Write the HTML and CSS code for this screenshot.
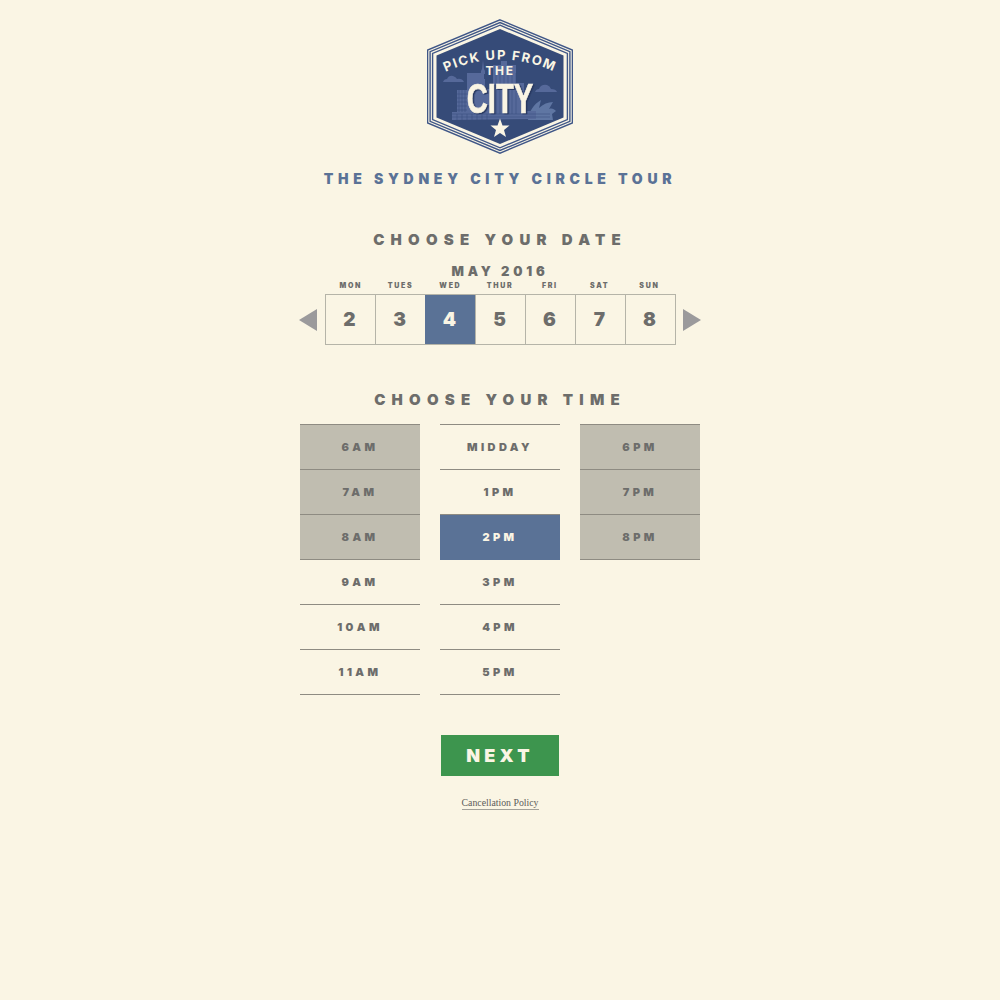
FILE: index.html
```html
<!DOCTYPE html>
<html lang="en">
<head>
<meta charset="utf-8">
<title>The Sydney City Circle Tour</title>
<link rel="stylesheet" href="styles.css">
</head>
<body>
<main class="page">
  <svg class="logo" width="146" height="136" viewBox="0 0 146 136" xmlns="http://www.w3.org/2000/svg">
    <defs>
      <path id="arc" d="M16 54 Q73 27 130 54"/>
    </defs>
    <polygon class="ring" points="73,.8 145.4,31 145.4,104 73,134.200 .6,104 .6,31"/>
    <polygon class="ring" points="73,3.500 142.900,32.700 142.900,102.300 73,131.500 3.100,102.300 3.100,32.700"/>
    <polygon class="ring" points="73,6.200 140.400,34.400 140.400,100.600 73,128.800 5.600,100.600 5.600,34.400"/>
    <polygon class="hexfill" points="73,10 136.500,36.500 136.500,98.500 73,125 9.500,98.500 9.500,36.500"/>
    <g class="sky">
      <path d="M16 63q1-3 4-3 2-4 6-3 3 1 4 3 5-1 7 3z"/>
      <path d="M108 73q1-3 4-3 2-5 8-4 3 1 4 4 5 0 6 3z"/>
      <path class="sky-dim" d="M101 101c1-9 6-16 13-20l-2 8c4-4 9-6 14-6l-4 7c3-1 5 0 7 2l-4 3 1 6z"/>
      <path d="M25 101v-8h5v-22h10v-17h15v8h-1v-2h1v-5h-1v-3l1-2 1-9 1 9 1 2v3h-1v5h1v10h8v-24h8v-4h6v4h9v18h8v28h12v8z"/>
    </g>
    <g class="sky-lines">
      <path d="M25 95h98M25 98h98"/>
      <path d="M30 75h10M30 79h10M30 83h10M30 87h10M30 91h10"/>
      <path d="M32 71v22M35 71v22M38 71v22"/>
      <path d="M69 54v41M73 54v41M77 54v41M81 54v41M85 54v41M89 54v41"/>
      <path d="M30 95v6M35 95v6M40 95v6M45 95v6M50 95v6M55 95v6M60 95v6"/>
    </g>
    <text class="logo-arc"><textPath href="#arc" startOffset="50%" text-anchor="middle">PICK UP FROM</textPath></text>
    <text class="logo-the" x="73" y="55.500" text-anchor="middle">THE</text>
    <text class="logo-city" x="73" y="94" text-anchor="middle">CITY</text>
    <polygon class="star" points="73,99.500 75.500,106.500 82.500,106.500 77,111 79,118 73,114 67,118 69,111 63.500,106.500 70.500,106.500"/>
  </svg>

  <h1 class="tour">THE SYDNEY CITY CIRCLE TOUR</h1>

  <section class="date">
    <h2 class="heading">CHOOSE YOUR DATE</h2>
    <div class="month">MAY 2016</div>
    <div class="weekdays">
      <span>MON</span><span>TUES</span><span>WED</span><span>THUR</span><span>FRI</span><span>SAT</span><span>SUN</span>
    </div>
    <div class="cal">
      <svg class="arrow" width="18" height="22" viewBox="0 0 18 22"><polygon points="18,0 18,22 0,11"/></svg>
      <div class="days">
        <div class="day">2</div>
        <div class="day">3</div>
        <div class="day on">4</div>
        <div class="day">5</div>
        <div class="day">6</div>
        <div class="day">7</div>
        <div class="day">8</div>
      </div>
      <svg class="arrow" width="18" height="22" viewBox="0 0 18 22"><polygon points="0,0 0,22 18,11"/></svg>
    </div>
  </section>

  <section class="time">
    <h2 class="heading">CHOOSE YOUR TIME</h2>
    <div class="slots">
      <div class="col">
        <div class="slot off">6AM</div>
        <div class="slot off">7AM</div>
        <div class="slot off">8AM</div>
        <div class="slot">9AM</div>
        <div class="slot">10AM</div>
        <div class="slot">11AM</div>
      </div>
      <div class="col">
        <div class="slot">MIDDAY</div>
        <div class="slot">1PM</div>
        <div class="slot on">2PM</div>
        <div class="slot">3PM</div>
        <div class="slot">4PM</div>
        <div class="slot">5PM</div>
      </div>
      <div class="col">
        <div class="slot off">6PM</div>
        <div class="slot off">7PM</div>
        <div class="slot off">8PM</div>
      </div>
    </div>
  </section>

  <a class="next" href="#">NEXT</a>
  <a class="policy" href="#">Cancellation Policy</a>
</main>
</body>
</html>
```
FILE: styles.css
```css
* { box-sizing: border-box; }
html, body { margin: 0; padding: 0; }
body {
  background: #faf5e4;
  color: #6d6d6b;
  font-family: "Inter", "Liberation Sans", sans-serif;
  font-weight: 900;
}
.page {
  display: flex;
  flex-direction: column;
  align-items: center;
  height: 1000px;
  padding-top: 19px;
}
.logo { display: block; flex: none; }
.ring { fill: none; stroke: #3f5687; stroke-width: 1.4; }
.hexfill { fill: #364b78; }
.sky path { fill: #56699a; }
.sky .sky-dim { fill: #5f76a3; }
.sky-lines path { fill: none; stroke: #364b78; stroke-width: .5; }
.logo-arc, .logo-the {
  fill: #faf5e4;
  font-family: "Inter", sans-serif;
  font-weight: 700;
}
.logo-arc { font-size: 13px; letter-spacing: 1.6px; }
.logo-the { font-size: 12px; letter-spacing: 1.6px; }
.logo-city {
  fill: #faf5e4;
  stroke: #faf5e4;
  stroke-width: .7px;
  font-family: "Liberation Sans", sans-serif;
  font-weight: 700;
  font-size: 43px;
  transform-box: fill-box;
  transform-origin: center;
  transform: scaleX(.68);
  filter: drop-shadow(2px 1px 0 #27375f);
}
.star { fill: #faf5e4; }

.tour {
  margin: 15px 0 0;
  font-size: 14px;
  line-height: 18px;
  font-weight: 900;
  letter-spacing: 4.7px;
  color: #5a7296;
  white-space: nowrap;
}
.heading {
  margin: 0;
  font-size: 15px;
  line-height: 18px;
  font-weight: 900;
  letter-spacing: 6.2px;
  text-align: center;
  white-space: nowrap;
}
.date { margin-top: 43px; display: flex; flex-direction: column; align-items: center; }
.month {
  margin-top: 14px;
  font-size: 13px;
  line-height: 16px;
  letter-spacing: 3.8px;
}
.weekdays {
  display: flex;
  width: 350px;
  padding-left: 1px;
  font-size: 7px;
  line-height: 10px;
  letter-spacing: 1.7px;
  margin-top: 2px;
}
.weekdays span { width: 49.75px; flex: none; text-align: center; }
.cal {
  display: flex;
  align-items: center;
  gap: 8px;
  margin-top: 3px;
}
.arrow { display: block; fill: #9b9a9c; }
.arrow:last-child { margin-left: -1px; }
.days {
  display: flex;
  border: 1px solid #b5b4a8;
  width: 351px;
  height: 51px;
}
.day {
  flex: 1;
  display: flex;
  align-items: center;
  justify-content: center;
  padding-right: 2px;
  font-size: 19px;
  border-left: 1px solid #b5b4a8;
}
.day:first-child { border-left: 0; }
.day.on { background: #5a7296; color: #faf5e4; border-left-color: #5a7296; }

.time { margin-top: 46px; display: flex; flex-direction: column; align-items: center; }
.slots {
  display: flex;
  gap: 20px;
  width: 400px;
  margin-top: 15px;
  align-items: flex-start;
}
.col { width: 120px; border-top: 1px solid #8e8b82; }
.slot {
  height: 45px;
  display: flex;
  align-items: center;
  justify-content: center;
  font-size: 11px;
  letter-spacing: 3.4px;
  border-bottom: 1px solid #8e8b82;
}
.slot.off { background: #c0bdb0; }
.slot.on { background: #5a7296; color: #faf5e4; border-bottom-color: #5a7296; }

.next {
  margin-top: 40px;
  width: 118px;
  height: 41px;
  display: flex;
  align-items: center;
  justify-content: center;
  background: #3d954e;
  color: #faf5e4;
  font-size: 18px;
  letter-spacing: 4.2px;
  text-decoration: none;
}
.policy {
  margin-top: 21px;
  font-family: "Liberation Serif", serif;
  font-weight: 400;
  font-size: 9.8px;
  line-height: 12px;
  color: #5c5c5a;
  text-decoration: none;
  border-bottom: 1px solid #a3a199;
}
```
